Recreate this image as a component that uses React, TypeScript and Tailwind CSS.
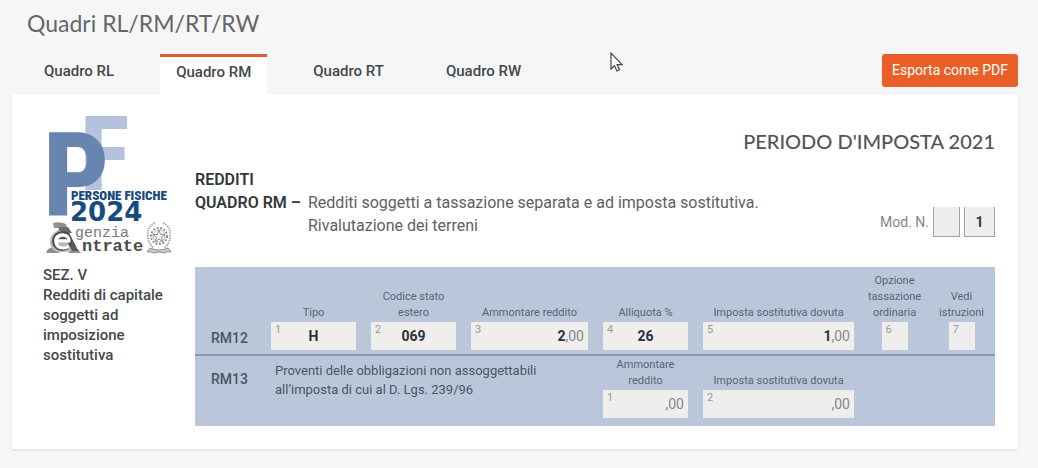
import { useState } from "react";
import clsx from "clsx";

const TABS = ["RL", "RM", "RT", "RW"];

const LETTER_FONT = { fontFamily: '"Roboto Condensed", "Open Sans Condensed", Lato, sans-serif' };

function Logo() {
  return (
    <svg className="overflow-visible" width="132" height="142" viewBox="0 0 132 142" role="img" aria-label="Persone Fisiche 2024 - Agenzia Entrate">
      <text x="37" y="76" fontSize="104" fontWeight="800" fill="#b4c3db" style={LETTER_FONT}>F</text>
      <text x="0" y="102" fontSize="116" fontWeight="800" fill="#6885b1" style={LETTER_FONT}>P</text>
      <g fill="#174a7e">
        <text x="28" y="86" fontSize="13" fontWeight="900" style={LETTER_FONT}>PERSONE FISICHE</text>
        <text x="27" y="107" fontSize="26" fontWeight="700" style={{ fontFamily: '"DejaVu Sans", sans-serif' }}>2024</text>
      </g>
      <g style={{ fontFamily: '"Liberation Mono", monospace' }}>
        <text x="32" y="123" fontSize="15" fill="#77787a">genzia</text>
        <text x="39" y="137" fontSize="17" fontWeight="700" fill="#4a4b4d">ntrate</text>
      </g>
      <g>
        <path d="M10 109q7-2 13 1l1 4-13 0z" fill="#8f9092" />
        <path d="M16 113h9l4 6-14 1z" fill="#6b6c6e" />
        <path d="M3 139q2-6 8-5l6 5z" fill="#8d8e90" />
        <path d="M25 139q4-6 9-4l4 4z" fill="#8d8e90" />
        <path d="M15 116q-9 5-8 13 1 9 11 9 13 0 15-4l-7-15z" fill="#b7b8ba" />
        <path d="M25 117l8 15q1 4 4 5h-8l-9-19z" fill="#58595b" />
        <circle cx="19" cy="127" r="9" fill="none" stroke="#4c4d4f" strokeWidth="2" />
        <path d="M13 127h13q0-6-6-6-7 0-7 6 0 7 7 7 4 0 6-2" fill="none" stroke="#ffffff" strokeWidth="3" />
        <path d="M16 125q1-2 4-2t3 2z" fill="#4c4d4f" />
      </g>
      <g fill="none" stroke="#8f9094">
        <circle cx="116" cy="122" r="8" strokeWidth="2" strokeDasharray="2 1.5" />
        <circle cx="116" cy="122" r="6" strokeWidth="1" stroke="#b0b1b4" />
        <path d="M116 116l1.600 4.500h4.600l-3.700 2.800 1.400 4.500-3.900-2.800-3.900 2.800 1.400-4.500-3.700-2.800h4.600z" fill="#f4f4f4" strokeWidth="1" />
        <path d="M112 109q-8 3-7 13 0 8 6 12M120 109q8 3 7 13 0 8-6 12" strokeWidth="2" strokeDasharray="1.500 1" stroke="#a9aaad" />
        <path d="M107 134q9 4 18 0l3 4q-4-1-6 1-6-2-12 0-2-2-6-1z" fill="#c9cacc" strokeWidth="1" />
      </g>
    </svg>
  );
}

type FieldProps = {
  id: string;
  n: number;
  label: string;
  value?: string;
  cents?: boolean;
  narrow?: boolean;
};

function Field({ id, n, label, value = "", cents = false, narrow = false }: FieldProps) {
  return (
    <div className="flex flex-col items-center justify-end gap-px">
      <label htmlFor={id} className="text-center text-[11px] leading-4 text-[#5a6474]">
        {label}
      </label>
      <div className={clsx("relative flex h-7 items-center bg-[#f0eeec] text-sm text-[#85878b]", narrow ? "w-[26px]" : "w-full", cents && "pr-1")}>
        <span className="absolute top-0 left-1 text-[11px] leading-4 text-[#999a9c]">{n}</span>
        <input
          id={id}
          defaultValue={value}
          className={clsx("h-full w-full min-w-0 bg-transparent font-bold text-[#2e3136] outline-none", cents ? "text-right" : "text-center")}
        />
        {cents && <span>,00</span>}
      </div>
    </div>
  );
}

const ROW = "grid grid-cols-[45px_minmax(0,85fr)_minmax(0,85fr)_minmax(0,117fr)_minmax(0,85fr)_minmax(0,151fr)_minmax(0,51fr)_minmax(0,53fr)] gap-x-[15px] pr-[7px] pl-4";

export default function App() {
  const [active, setActive] = useState("RM");
  return (
    <div className="min-h-screen bg-[#f6f6f6] px-3 pb-[19px] font-['Roboto',sans-serif] text-[#43484d]">
      <h1 className="px-[15px] pt-[7px] pb-px font-['Lato',sans-serif] text-[23px] leading-8 text-[#63676b]">Quadri RL/RM/RT/RW</h1>

      <header className="flex items-start justify-between pt-[14px] pr-2">
        <div role="tablist" className="flex gap-[30px] pl-4">
          {TABS.map((t) => (
            <button
              key={t}
              role="tab"
              aria-selected={active === t}
              onClick={() => setActive(t)}
              className={clsx(
                "h-10 border-t-3 px-4 text-[15px] font-medium",
                active === t ? "border-[#dd5f2c] bg-white pb-1.5" : "border-transparent pb-2"
              )}
            >
              Quadro {t}
            </button>
          ))}
        </div>
        <button className="h-[33px] rounded-[3px] bg-[#e95f27] px-2.5 pb-0.5 text-sm text-white">Esporta come PDF</button>
      </header>

      <main className="mr-2 grid grid-cols-[183px_minmax(0,1fr)] bg-white pb-[23px] shadow-[0_1px_3px_rgba(0,0,0,0.1)]">
        <aside className="pt-5 pr-4 pl-[31px] text-[15px] leading-5 font-medium">
          <Logo />
          <p className="pt-[9px]">SEZ. V</p>
          <p>Redditi di capitale soggetti ad imposizione sostitutiva</p>
        </aside>

        <section className="pt-[35px] pr-[23px]">
          <h2 className="text-right font-['Lato',sans-serif] text-xl leading-6 font-medium text-[#50555a]">PERIODO D'IMPOSTA 2021</h2>

          <div className="mt-[15px] flex items-end justify-between">
            <div className="text-base leading-[23px]">
              <h3 className="font-semibold text-[#33373c]">REDDITI</h3>
              <div className="flex gap-1">
                <h3 className="w-[109px] shrink-0 font-semibold whitespace-nowrap text-[#33373c]">QUADRO RM –</h3>
                <p className="text-[#5d6166]">
                  Redditi soggetti a tassazione separata e ad imposta sostitutiva.
                  <br />
                  Rivalutazione dei terreni
                </p>
              </div>
            </div>
            <div className="flex shrink-0 items-center gap-1 text-sm">
              <label htmlFor="mod-a" className="text-[#85878b]">Mod. N.</label>
              <input id="mod-a" className="h-[30px] w-[27px] border border-t-0 border-[#93a1b3] bg-[#f0eeed] text-center" />
              <input aria-label="Mod. N." defaultValue="1" className="h-[30px] w-[31px] border border-t-0 border-[#93a1b3] bg-[#f0eeed] text-center font-bold text-[#33373c]" />
            </div>
          </div>

          <div className="mt-[30px] bg-[#bac6d9]">
            <div className={clsx(ROW, "border-b-2 border-[#8595ab] pt-1.5 pb-1")}>
              <span className="self-end pb-0.5 text-sm leading-5 font-medium text-[#4c5562]">RM12</span>
              <Field id="rm12-1" n={1} label="Tipo" value="H" />
              <Field id="rm12-2" n={2} label="Codice stato estero" value="069" />
              <Field id="rm12-3" n={3} label="Ammontare reddito" value="2" cents />
              <Field id="rm12-4" n={4} label="Alliquota %" value="26" />
              <Field id="rm12-5" n={5} label="Imposta sostitutiva dovuta" value="1" cents />
              <Field id="rm12-6" n={6} label="Opzione tassazione ordinaria" narrow />
              <Field id="rm12-7" n={7} label="Vedi istruzioni" narrow />
            </div>
            <div className={clsx(ROW, "pt-px pb-2")}>
              <span className="pt-3 text-sm leading-5 font-medium text-[#4c5562]">RM13</span>
              <p className="col-span-3 pt-1 pl-1 text-[13px] leading-[19px] text-[#4c5562]">
                Proventi delle obbligazioni non assoggettabili
                <br />
                all’imposta di cui al D. Lgs. 239/96
              </p>
              <Field id="rm13-1" n={1} label="Ammontare reddito" cents />
              <Field id="rm13-2" n={2} label="Imposta sostitutiva dovuta" cents />
            </div>
          </div>
        </section>
      </main>

      <svg className="pointer-events-none absolute top-[52px] left-[610px]" width="13" height="20" viewBox="0 0 13 20" aria-hidden="true">
        <path d="M1 1v16l3.500-3.300 2.500 5.300 2.500-1.200-2.400-5.200h5z" fill="#ffffff" stroke="#45484c" strokeWidth="1.200" />
      </svg>
    </div>
  );
}
